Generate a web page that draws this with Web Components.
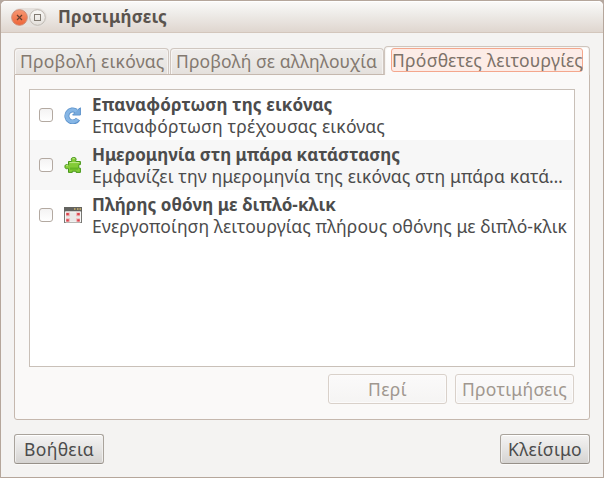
<!DOCTYPE html>
<html lang="el"><head><meta charset="utf-8"><title>Προτιμήσεις</title>
<style>
html,body{margin:0;width:604px;height:478px;overflow:hidden;background:#b5a89f;font-family:"Noto Sans","Open Sans",sans-serif;font-size:17.5px;color:#4c4c4c}
</style></head><body>
<prefs-window></prefs-window>
<script>
const define=(name,html,init)=>customElements.define(name,class extends HTMLElement{
  connectedCallback(){
    if(this.shadowRoot)return;
    this.attachShadow({mode:'open'}).innerHTML=html;
    if(init)init(this,this.shadowRoot);
  }
});

/* Text label whose tracking is tuned so the line spans the given width. */
define('fit-label',`<style>
:host{display:block;height:22px;line-height:22px;white-space:nowrap;flex:none}
span{display:inline-block;white-space:nowrap}
</style><span></span>`,(el,root)=>{
  const s=root.querySelector('span'),t=el.getAttribute('text'),w=+el.getAttribute('w');
  s.textContent=t;el.style.width=w+'px';
  const n=s.getBoundingClientRect().width;
  s.style.letterSpacing=((w-n)/t.length)+'px';
});

define('title-bar',`<style>
:host{display:flex;box-sizing:border-box;height:32px;padding:5px 0 0 10px;border-bottom:1px solid #d3c6bc;border-radius:5px 5px 0 0;background:linear-gradient(#fbfaf9,#f0eeeb 35%,#dfd6cf);box-shadow:inset 0 1px #fff}
.ctl{display:flex;width:36px;height:19px;margin:2px 11px 0 0;border-radius:10px;background:#e5e1dd}
svg{display:block;width:36px;height:19px}
fit-label{font-weight:700;font-size:17px;color:#5a544e}
</style><div class="ctl"><svg viewBox="0 0 36 19"><defs><linearGradient id="o" x2="0" y2="1"><stop stop-color="#f79873"/><stop offset="1" stop-color="#ed6437"/></linearGradient><linearGradient id="g" x2="0" y2="1"><stop stop-color="#faf9f7"/><stop offset="1" stop-color="#e3dfda"/></linearGradient></defs>
<circle cx="8.5" cy="9.5" r="7.8" fill="url(#o)" stroke="#cf8b73"/><path d="M6 7l5 5M11 7l-5 5" stroke="#67402f" stroke-width="1.2"/>
<circle cx="26.5" cy="9.5" r="7.8" fill="url(#g)" stroke="#bfb9b2"/><rect x="23.5" y="6.5" width="6" height="6" fill="none" stroke="#827b72"/></svg></div>
<fit-label text="Προτιμήσεις" w="109"></fit-label>`);

define('tab-button',`<style>
:host{display:block;box-sizing:border-box;height:26px;padding:1px 4px 0 5px;border:1px solid #d0c7c0;border-bottom:0;border-radius:4px 4px 0 0;background:linear-gradient(#efedeb,#e9e6e3 70%,#e4e0dc);box-shadow:inset 1px 1px #f7f5f3,inset -1px 0 #f4f2f0;color:#837970}
:host([active]){height:29px;background:linear-gradient(#fff,#faf9f8);padding:1px 6px 0 6px;margin-bottom:-1px;position:relative;border-color:#cfc5bd;color:#7c7269}
:host([active]) div{box-sizing:border-box;height:24px;border:1px solid #f4a78d;border-radius:3px;background:#fcece7}
</style><div><slot></slot></div>`);

define('push-button',`<style>
:host{display:flex;box-sizing:border-box;height:30px;padding-top:3px;justify-content:center;border:1px solid #a9a39c;border-bottom-color:#969089;border-radius:3px;background:linear-gradient(#f4f3f3,#e7e6e5 45%,#d5d3d1);box-shadow:inset 0 1px #fff,inset 1px 0 #efeeed,inset -1px 0 #efeeed,0 1px #fbfaf9;color:#4c4c4c}
:host([disabled]){border-color:#d9d1ca;background:linear-gradient(#fbfafa,#f5f4f3);box-shadow:inset 0 0 0 1px #fcfbfb;color:#a0978f}
</style><slot></slot>`);

const art={
reload:'<path d="M14 13.1A6 6 0 1 1 12.3 5" fill="none" stroke="#5c92cb" stroke-width="5"/><path d="M8.6 9H16.4V1.8L14 3.6Z" fill="#78abde" stroke="#5c92cb" stroke-linejoin="round"/><path d="M13.5 13.2A5.9 5.9 0 1 1 12.6 5.4" fill="none" stroke="#86b6e5" stroke-width="3.4"/><path d="M11 8.2H15.6V3.8Z" fill="#78abde"/>',
puzzle:'<path d="M4.5 5.5H7.6V4.3C6.7 2.8 7.6 1.5 9.7 1.5S12.7 2.8 11.8 4.3V5.5H16.4V8.6H14.8V12.2H16.4V16.4H12.1V15.2H8.3V16.4H4.5V12.6H3.4C2 13.2.9 12.3.9 10.6S2 8.2 3.4 8.8H4.5Z" fill="#83cb37" stroke="#479719" stroke-linejoin="round"/><path d="M8.6 2.7H10.8M5.5 6.6H15.2M2.2 9.7H4" stroke="#c0e98c"/><path d="M6 11.5h8v2.2H6z" fill="#65b526"/>',
full:'<rect x=".5" y="1.5" width="17" height="15" fill="#e9e9e8" stroke="#777773"/><path d="M0 1h18v4.5H0z" fill="#646460"/><path d="M10 3h1.5M13 3h1.5M15.5 3H17" stroke="#d4b66c" stroke-width="1.3"/><path d="M1.5 6h15v10h-15z" fill="none" stroke="#f7f7f6"/><g fill="#f0b9ba"><path d="M2 6.6h4v3.6H2zM12 6.6h4v3.6h-4zM2 12.2h4v3.6H2zM12 12.2h4v3.6h-4z"/></g><g fill="#d9434c"><path d="M2.3 7h2.5v2.2H2.3zM13.2 7h2.5v2.2h-2.5zM2.3 13.2h2.5v2.2H2.3zM13.2 13.2h2.5v2.2h-2.5z"/></g>'};
define('plugin-icon','<style>:host{display:block;width:18px;height:18px;flex:none}svg{display:block}</style>',(el,root)=>{
  root.innerHTML+='<svg width="18" height="18" viewBox="0 0 18 18">'+art[el.getAttribute('name')]+'</svg>';
});

define('plugin-row',`<style>
:host{display:flex;box-sizing:border-box;height:50px;padding:3px 0 0 9px}
:host(:nth-of-type(even)){background:#f7f7f7}
.box{box-sizing:border-box;width:14px;height:14px;margin:15px 11px 0 0;border:1px solid #b3a9a1;border-radius:3px;background:linear-gradient(#f4f3f3,#fff);flex:none}
</style><div class="box"></div><slot name="icon"></slot><div><slot></slot></div>`);
</script>
<template id="window">
<style>
:host{display:flex;flex-direction:column;box-sizing:border-box;width:604px;height:478px;border:1px solid #b5a69b;border-radius:6px 6px 0 0;background:#f4f3f2}
.tabs{display:flex;align-items:flex-end;gap:1px;height:28px;margin:13px 13px 0}
.tabs tab-button:first-child{width:155px}
.tabs tab-button:nth-child(2){width:214px;margin-right:-1px}
.tabs tab-button:nth-child(3){width:206px}
.panel{box-sizing:border-box;height:346px;margin:0 13px;padding:14px;border:1px solid #c5b8ae;border-radius:0 0 3px 3px;background:#faf9f8}
.list{box-sizing:border-box;width:546px;height:278px;border:1px solid #c9c0b8;background:#fff}
.list plugin-icon{margin:13px 10px 0 0}
.t{font-weight:700;font-size:17px;line-height:23px}
.acts{display:flex;justify-content:flex-end;gap:8px;margin:7px 1px 0 0}
.acts push-button{width:119px}
.foot{display:flex;justify-content:space-between;margin:14px 13px 0}
.foot push-button{width:90px}
</style>
<title-bar></title-bar>
<div class="tabs">
<tab-button><fit-label text="Προβολή εικόνας" w="144.5"></fit-label></tab-button>
<tab-button><fit-label text="Προβολή σε αλληλουχία" w="201"></fit-label></tab-button>
<tab-button active><fit-label text="Πρόσθετες λειτουργίες" w="191"></fit-label></tab-button>
</div>
<div class="panel"><div class="list">
<plugin-row><plugin-icon slot="icon" name="reload"></plugin-icon><fit-label class="t" text="Επαναφόρτωση της εικόνας" w="240.5"></fit-label><fit-label text="Επαναφόρτωση τρέχουσας εικόνας" w="293"></fit-label></plugin-row>
<plugin-row><plugin-icon slot="icon" name="puzzle"></plugin-icon><fit-label class="t" text="Ημερομηνία στη μπάρα κατάστασης" w="308"></fit-label><fit-label text="Εμφανίζει την ημερομηνία της εικόνας στη μπάρα κατά…" w="471"></fit-label></plugin-row>
<plugin-row><plugin-icon slot="icon" name="full"></plugin-icon><fit-label class="t" text="Πλήρης οθόνη με διπλό-κλικ" w="244"></fit-label><fit-label text="Ενεργοποίηση λειτουργίας πλήρους οθόνης με διπλό-κλικ" w="475"></fit-label></plugin-row>
</div>
<div class="acts"><push-button disabled><fit-label text="Περί" w="39"></fit-label></push-button><push-button disabled><fit-label text="Προτιμήσεις" w="105"></fit-label></push-button></div></div>
<div class="foot"><push-button><fit-label text="Βοήθεια" w="70"></fit-label></push-button><push-button><fit-label text="Κλείσιμο" w="74"></fit-label></push-button></div>
</template>
<script>
customElements.define('prefs-window',class extends HTMLElement{
  connectedCallback(){
    this.attachShadow({mode:'open'}).append(document.getElementById('window').content.cloneNode(true));
  }
});
</script>
</body></html>
